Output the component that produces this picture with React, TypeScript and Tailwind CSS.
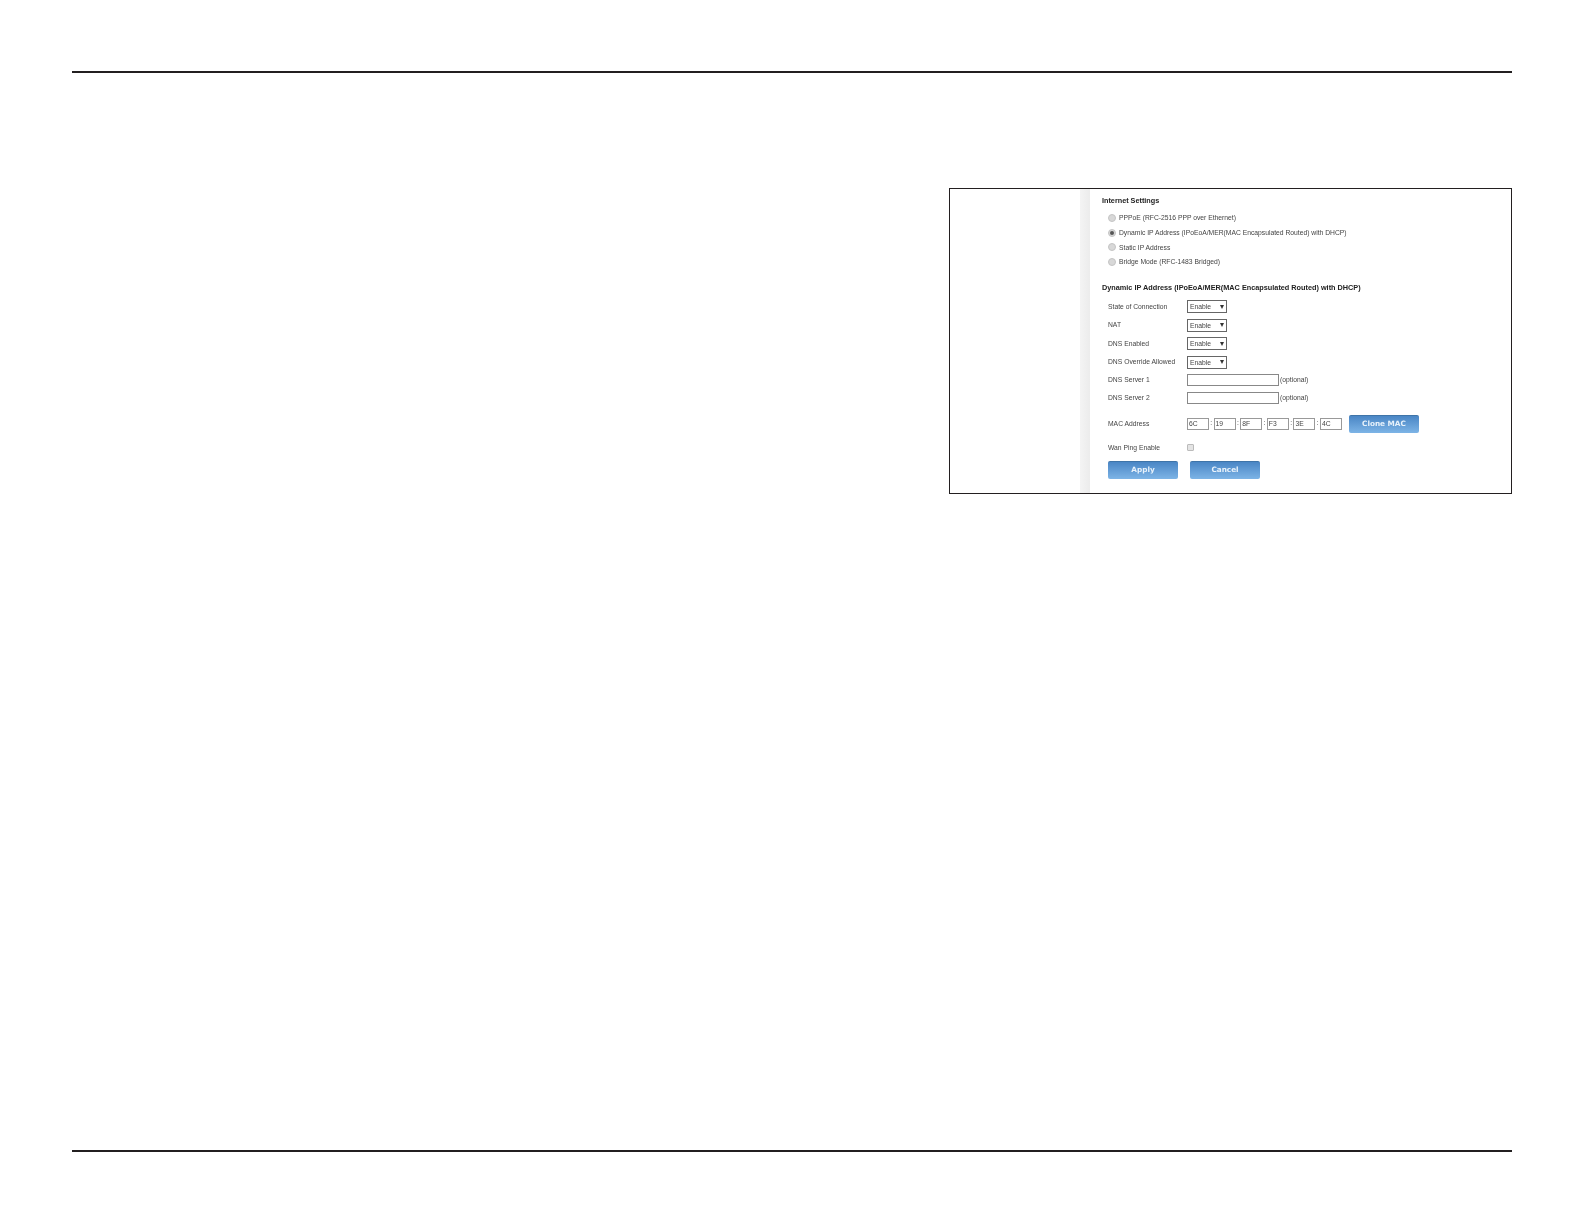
const font = "font-['Liberation_Sans',Arial,sans-serif]";

function Radio({ checked }: { checked?: boolean }) {
  return (
    <span className="-mt-[1px] flex h-[8px] w-[8px] shrink-0 items-center justify-center rounded-full border border-[#c4c4c4] bg-[#d8d8d8]">
      {checked && <span className="h-[4px] w-[4px] rounded-full bg-[#555]" />}
    </span>
  );
}

function RadioRow({ label, checked, className }: { label: string; checked?: boolean; className: string }) {
  return (
    <div className={`flex items-center gap-[3px] pl-[6px] ${className}`}>
      <Radio checked={checked} />
      <span className="text-[6.75px] leading-[10px] text-[#444]">{label}</span>
    </div>
  );
}

function Select() {
  return (
    <div className="flex h-[13px] w-[40px] items-center justify-between border border-[#666] pl-[2px] pr-[2px] text-[6.75px] leading-[11px] text-[#444]">
      <span>Enable</span>
      <svg width="4" height="4" viewBox="0 0 4 4">
        <path d="M0 0h4L2 4z" fill="#333" />
      </svg>
    </div>
  );
}

function Field({ label, className, children }: { label: string; className: string; children: React.ReactNode }) {
  return (
    <div className={`flex items-center ${className}`}>
      <span className="w-[85px] pl-[6px] text-[6.75px] leading-[10px] text-[#444]">{label}</span>
      {children}
    </div>
  );
}

function TextBox() {
  return (
    <>
      <div className="h-[12px] w-[92px] border border-[#888] bg-white" />
      <span className="ml-[1px] mt-[1px] text-[6.75px] leading-[10px] text-[#444]">(optional)</span>
    </>
  );
}

function MacPart({ value }: { value: string }) {
  return (
    <div className="flex h-[12px] w-[22px] items-center border border-[#999] pl-[1px] text-[6.75px] leading-[10px] text-[#444]">{value}</div>
  );
}

function BlueButton({ label, className = "" }: { label: string; className?: string }) {
  return (
    <div
      className={`flex h-[18px] w-[70px] items-center justify-center rounded-[2px] border-t border-[#3f74a8] bg-gradient-to-b from-[#4a86c5] to-[#7db4e6] font-['DejaVu_Sans',sans-serif] text-[7.3px] font-bold text-[#e8f2fb] ${className}`}
    >
      {label}
    </div>
  );
}

export default function App() {
  const mac = ["6C", "19", "8F", "F3", "3E", "4C"];
  return (
    <div className={`min-h-[1224px] w-full bg-white pt-[71px] ${font}`}>
      <div className="mx-[72px] h-[2px] bg-[#231f20]" />

      <div className="ml-[949px] mr-[72px] mt-[115px] flex h-[306px] border border-[#231f20]">
        <div className="w-[130px]" />
        <div className="w-[10px] bg-gradient-to-r from-[#f4f4f4] to-[#ececec]" />
        <div className="flex-1 pl-[12px] pt-[7px] blur-[0.3px]">
          <div className="text-[7.25px] font-bold leading-[10px] text-[#222]">Internet Settings</div>
          <RadioRow className="mt-[7px]" label="PPPoE (RFC-2516 PPP over Ethernet)" />
          <RadioRow className="mt-[5px]" checked label="Dynamic IP Address (IPoEoA/MER(MAC Encapsulated Routed) with DHCP)" />
          <RadioRow className="mt-[4.5px]" label="Static IP Address" />
          <RadioRow className="mt-[4.5px]" label="Bridge Mode (RFC-1483 Bridged)" />
          <div className="mt-[16px] text-[7.3px] font-bold leading-[10px] text-[#222]">
            Dynamic IP Address (IPoEoA/MER(MAC Encapsulated Routed) with DHCP)
          </div>
          <Field className="mt-[7px]" label="State of Connection"><Select /></Field>
          <Field className="mt-[5.5px]" label="NAT"><Select /></Field>
          <Field className="mt-[5.5px]" label="DNS Enabled"><Select /></Field>
          <Field className="mt-[5.5px]" label="DNS Override Allowed"><Select /></Field>
          <Field className="mt-[5px]" label="DNS Server 1"><TextBox /></Field>
          <Field className="mt-[6px]" label="DNS Server 2"><TextBox /></Field>
          <Field className="mt-[11px]" label="MAC Address">
            <div className="flex items-center">
              {mac.map((part, i) => (
                <div key={part} className="flex items-center">
                  {i > 0 && <span className="w-[4.6px] text-center text-[6.75px] text-[#444]">:</span>}
                  <MacPart value={part} />
                </div>
              ))}
              <BlueButton className="ml-[7px]" label="Clone MAC" />
            </div>
          </Field>
          <Field className="mt-[10px]" label="Wan Ping Enable">
            <div className="h-[7px] w-[7px] rounded-[1px] border border-[#bbb] bg-[#e4e4e4]" />
          </Field>
          <div className="mt-[8px] flex gap-[12px] pl-[6px]">
            <BlueButton label="Apply" />
            <BlueButton label="Cancel" />
          </div>
        </div>
      </div>

      <div className="mx-[72px] mt-[656px] h-[2px] bg-[#231f20]" />
    </div>
  );
}
